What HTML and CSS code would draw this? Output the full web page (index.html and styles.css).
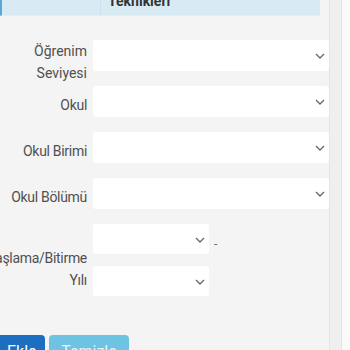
FILE: index.html
```html
<!DOCTYPE html>
<html lang="tr">
<head>
<meta charset="utf-8">
<link rel="stylesheet" href="styles.css">
</head>
<body>
<div class="page">
  <div class="panel">
    <div class="table-head">
      <div class="cell cell-first"></div>
      <div class="cell cell-title">Teknikleri</div>
    </div>
    <form class="form">
      <div class="row row-first">
        <label class="label label-top">Öğrenim<br>Seviyesi</label>
        <div class="select"><svg class="chev" viewBox="0 0 10 6"><path d="M1 1 L5 5 L9 1"/></svg></div>
      </div>
      <div class="row">
        <label class="label">Okul</label>
        <div class="select"><svg class="chev" viewBox="0 0 10 6"><path d="M1 1 L5 5 L9 1"/></svg></div>
      </div>
      <div class="row">
        <label class="label">Okul Birimi</label>
        <div class="select"><svg class="chev" viewBox="0 0 10 6"><path d="M1 1 L5 5 L9 1"/></svg></div>
      </div>
      <div class="row">
        <label class="label">Okul Bölümü</label>
        <div class="select"><svg class="chev" viewBox="0 0 10 6"><path d="M1 1 L5 5 L9 1"/></svg></div>
      </div>
      <div class="row row-years">
        <label class="label label-years">Başlama/Bitirme<br>Yılı</label>
        <div class="years">
          <div class="year-line">
            <div class="select select-year"><svg class="chev" viewBox="0 0 10 6"><path d="M1 1 L5 5 L9 1"/></svg></div>
            <span class="dash">-</span>
          </div>
          <div class="select select-year"><svg class="chev" viewBox="0 0 10 6"><path d="M1 1 L5 5 L9 1"/></svg></div>
        </div>
      </div>
      <div class="buttons">
        <button type="button" class="btn btn-primary">Ekle</button>
        <button type="button" class="btn btn-info">Temizle</button>
      </div>
    </form>
  </div>
  <div class="side-strip"></div>
  <div class="side-bg"></div>
</div>
</body>
</html>
```

FILE: styles.css
```css
html, body {
  margin: 0;
  padding: 0;
  height: 100%;
  overflow: hidden;
}
body {
  font-family: Roboto, "Liberation Sans", sans-serif;
  background: #f4f4f4;
  color: #505050;
}
.page {
  display: flex;
  height: 350px;
  width: 350px;
  overflow: hidden;
}
.panel {
  width: 329px;
  flex: none;
  background: #f4f4f4;
}
.side-strip {
  width: 11px;
  flex: none;
  background: #efefef;
  border-left: 1px solid #e6e6e6;
  border-right: 1px solid #e4e4e4;
}
.side-bg {
  flex: 1;
  background: #fafafa;
}
.table-head {
  display: flex;
  width: 320px;
  height: 30px;
  margin-top: -14px;
  background: #d8ebf5;
  border-left: 2px solid #5aa8d8;
  box-sizing: border-box;
  border-bottom: 1px solid #e3eef3;
}
.cell-first {
  width: 98px;
  border-right: 1px solid #cbe1ec;
}
.cell-title {
  padding-left: 7px;
  font-weight: 700;
  font-size: 14px;
  line-height: 30px;
  color: #333;
}
.form {
  margin-left: -20px;
  padding-top: 24px;
}
.row {
  display: flex;
  gap: 6px;
  height: 31px;
  margin-bottom: 15px;
}
.label {
  width: 107px;
  flex: none;
  text-align: right;
  font-size: 14px;
  letter-spacing: -0.3px;
  line-height: 22px;
  padding-top: 8px;
  box-sizing: border-box;
  white-space: nowrap;
}
.label-top {
  padding-top: 0;
  letter-spacing: 0;
}
.select {
  position: relative;
  width: 236px;
  height: 31px;
  background: #fff;
  border-radius: 3px;
  flex: none;
}
.chev {
  position: absolute;
  right: 4px;
  top: 13px;
  width: 10px;
  height: 6px;
  fill: none;
  stroke: #666;
  stroke-width: 1.3;
}
.row-years {
  height: 73px;
  margin-bottom: 38px;
}
.label-years {
  padding-top: 23px;
}
.years {
  display: flex;
  flex-direction: column;
  gap: 12px;
}
.year-line {
  display: flex;
  align-items: center;
}
.select-year {
  width: 116px;
  height: 30px;
}
.dash {
  font-size: 12px;
  color: #666;
  margin-left: 5px;
  padding-top: 9px;
}
.buttons {
  display: flex;
  gap: 4px;
  margin-left: 5px;
}
.btn {
  height: 34px;
  border: none;
  border-radius: 4px;
  font-family: Roboto, "Liberation Sans", sans-serif;
  font-size: 16px;
  color: #fff;
  padding: 7px 13px 0;
  line-height: 20px;
  display: flex;
  align-items: flex-start;
  justify-content: center;
}
.btn-primary {
  background: #1c6fc0;
  width: 60px;
  padding-left: 22px;
  justify-content: flex-start;
}
.btn-info {
  background: #6ec2e2;
  color: #e3f3fa;
  width: 80px;
}
```
